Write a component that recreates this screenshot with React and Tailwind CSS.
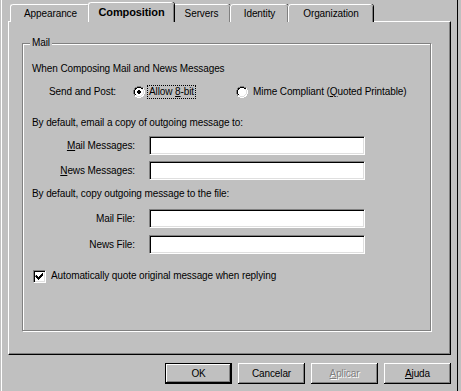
import React from "react";

const font = { fontFamily: '"Liberation Sans", Arial, sans-serif' };

function Tab({ label, w, selected }) {
  if (selected) {
    return (
      <div
        className={`relative z-10 -mx-[2px] h-[20px] mt-0 rounded-t-[3px] border-t border-l border-white bg-[#c0c0c0] shadow-[inset_-1px_0_0_#808080,1px_0_0_#000] flex items-center justify-center font-bold text-black text-[11px]`}
        style={{ width: w }}
      >
        <span className="-mt-[1px]">{label}</span>
      </div>
    );
  }
  return (
    <div
      className="h-[18px] mt-[2px] rounded-t-[3px] border-t border-l border-white bg-[#c0c0c0] shadow-[inset_-1px_0_0_#808080,1px_0_0_#000] flex items-center justify-center text-black"
      style={{ width: w }}
    >
      <span>{label}</span>
    </div>
  );
}

function Input() {
  return (
    <div className="w-[216px] h-[19px] bg-white border border-t-[#808080] border-l-[#808080] border-b-white border-r-white shadow-[inset_1px_1px_0_#000,inset_-1px_-1px_0_#dfdfdf]" />
  );
}

function Radio({ checked }) {
  return (
    <svg width="12" height="12" viewBox="0 0 12 12" className="shrink-0">
      <path d="M4 0h4v1h2v1h1v2h1v4h-1v2h-1v1h-2v1h-4v-1h-2v-1h-1v-2h-1v-4h1v-2h1v-1h2z" fill="#fff" />
      <path d="M4 0h4v1h-4zM2 1h2v1h-2zM8 1h2v1h-2zM1 2h1v2h-1zM0 4h1v4h-1zM1 8h1v2h-1z" fill="#808080" />
      <path d="M4 1h4v1h-4zM2 2h2v1h-2zM8 2h2v1h-2zM2 3h1v1h-1zM1 4h1v4h-1zM2 8h1v1h-1z" fill="#000" />
      <path d="M10 2h1v2h-1zM11 4h1v4h-1zM10 8h1v2h-1zM8 10h2v1h-2zM4 11h4v1h-4zM2 10h2v1h-2z" fill="#fff" />
      <path d="M9 3h1v1h-1zM10 4h1v4h-1zM9 8h1v1h-1zM8 9h1v1h-1zM4 10h4v1h-4zM3 9h1v1h-1z" fill="#dfdfdf" />
      {checked && <path d="M5 4h2v1h1v2h-1v1h-2v-1h-1v-2h1z" fill="#000" />}
    </svg>
  );
}

function Checkbox() {
  return (
    <div className="w-[13px] h-[13px] bg-white border border-t-[#808080] border-l-[#808080] border-b-white border-r-white shadow-[inset_1px_1px_0_#000,inset_-1px_-1px_0_#dfdfdf] relative shrink-0">
      <svg width="13" height="13" viewBox="0 0 13 13" className="absolute -left-[1px] -top-[1px]">
        <path d="M3 5h1v1h1v1h1v-1h1v-1h1v-1h1v-1h1v3h-1v1h-1v1h-1v1h-1v1h-1v-1h-1v-1h-1v-1h-1z" fill="#000" />
      </svg>
    </div>
  );
}

function Button({ children, isDefault, disabled }) {
  const inner = (
    <div className="w-full h-full flex items-center justify-center border-t border-l border-white shadow-[inset_-1px_-1px_0_#808080] ">
      <span className={disabled ? "text-[#808080] [text-shadow:1px_1px_0_#fff]" : "text-black"}>{children}</span>
    </div>
  );
  if (isDefault) {
    return (
      <div className="w-[67px] h-[21px] border border-black bg-[#c0c0c0]">
        <div className="w-full h-full border-r border-b border-black">{inner}</div>
      </div>
    );
  }
  return (
    <div className="w-[67px] h-[21px] bg-[#c0c0c0] border-r border-b border-black">{inner}</div>
  );
}

export default function App() {
  return (
    <div
      className="w-[461px] h-[391px] bg-[#c0c0c0] text-[10px] leading-[12px] tracking-[-0.1px] whitespace-nowrap text-black overflow-hidden shadow-[inset_1px_0_0_#c0c0c0,inset_2px_0_0_#fff,inset_-3px_0_0_#c0c0c0,inset_-4px_0_0_#000]"
      style={font}
    >
      {/* Tabs */}
      <div className="flex pl-[10px] pt-[2px] h-[21px] items-start">
        <Tab label="Appearance" w={80} />
        <Tab label="Composition" w={86} selected />
        <Tab label="Servers" w={58} />
        <Tab label="Identity" w={58} />
        <Tab label="Organization" w={85} />
      </div>

      {/* Panel */}
      <div className="ml-[8px] w-[443px] h-[334px] border-t border-l border-white border-r border-b border-r-black border-b-black shadow-[inset_-1px_-1px_0_#808080] pt-[21px] pl-[13px]">
        {/* Group box */}
        <div className="relative w-[409px] h-[288px] border border-[#808080] shadow-[inset_1px_1px_0_#fff,1px_1px_0_#fff] flex flex-col">
          <span className="absolute -top-[7px] left-[7px] bg-[#c0c0c0] px-[2px]">Mail</span>

          <div className="mt-[18px] h-[14px] flex items-center pl-[9px]">
            When Composing Mail and News Messages
          </div>

          <div className="mt-[8px] h-[16px] flex items-center">
            <span className="pl-[26px] w-[110px]">Send and Post:</span>
            <Radio checked />
            <span className="ml-[2px] border border-dotted border-black px-[1px] leading-[12px]">
              Allow <u>8</u>-bit
            </span>
            <div className="ml-[40px] flex items-center">
              <Radio />
              <span className="ml-[5px]">
                Mime Compliant (<u>Q</u>uoted Printable)
              </span>
            </div>
          </div>

          <div className="mt-[16px] h-[14px] flex items-center pl-[9px]">
            By default, email a copy of outgoing message to:
          </div>

          <div className="mt-[6px] flex items-center">
            <span className="w-[112px] text-right"><u>M</u>ail Messages:</span>
            <div className="ml-[14px]"><Input /></div>
          </div>

          <div className="mt-[6px] flex items-center">
            <span className="w-[112px] text-right"><u>N</u>ews Messages:</span>
            <div className="ml-[14px]"><Input /></div>
          </div>

          <div className="mt-[7px] h-[14px] flex items-center pl-[9px]">
            By default, copy outgoing message to the file:
          </div>

          <div className="mt-[8px] flex items-center">
            <span className="w-[112px] text-right">Mail File:</span>
            <div className="ml-[14px]"><Input /></div>
          </div>

          <div className="mt-[7px] flex items-center">
            <span className="w-[112px] text-right">News File:</span>
            <div className="ml-[14px]"><Input /></div>
          </div>

          <div className="mt-[15px] h-[14px] flex items-center pl-[10px]">
            <Checkbox />
            <span className="ml-[5px]">Automatically quote original message when replying</span>
          </div>
        </div>
      </div>

      {/* Buttons */}
      <div className="flex justify-end gap-[6px] pr-[10px] mt-[8px]">
        <Button isDefault>OK</Button>
        <Button>Cancelar</Button>
        <Button disabled><u>A</u>plicar</Button>
        <Button><u>A</u>juda</Button>
      </div>
    </div>
  );
}
